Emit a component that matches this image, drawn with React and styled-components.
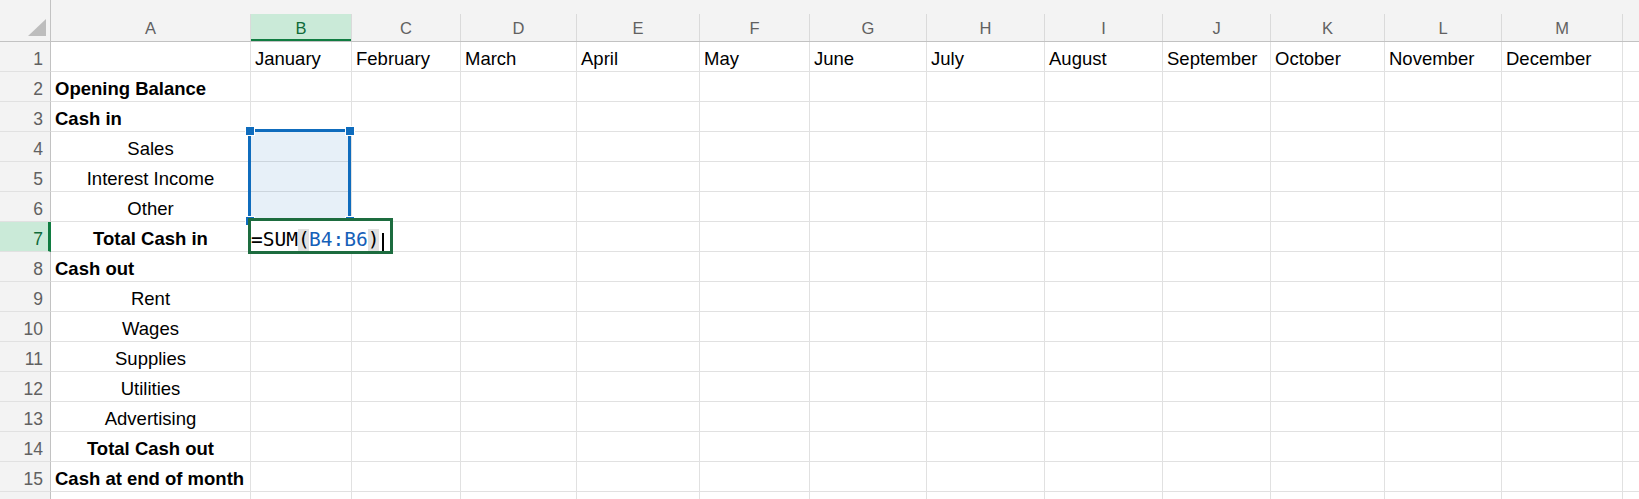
import React from 'react';
import styled, { createGlobalStyle } from 'styled-components';

const GlobalStyle = createGlobalStyle`
  html, body {
    margin: 0;
    padding: 0;
    background: #fff;
    overflow: hidden;
  }
  body {
    font-family: "Liberation Sans", Arial, sans-serif;
  }
`;

const GRID = '#e1e1e1';
const HEAD_BG = '#f3f3f3';
const HEAD_LINE = '#c2c2c2';
const SEL_BG = '#caead8';
const SEL_GREEN = '#107c41';
const RANGE_BLUE = '#0f6cbd';

// N is only partly in view, so it gets no letter
const COLUMNS = [
  { key: 'A', width: 200 },
  { key: 'B', width: 101 },
  { key: 'C', width: 109 },
  { key: 'D', width: 116 },
  { key: 'E', width: 123 },
  { key: 'F', width: 110 },
  { key: 'G', width: 117 },
  { key: 'H', width: 118 },
  { key: 'I', width: 118 },
  { key: 'J', width: 108 },
  { key: 'K', width: 114 },
  { key: 'L', width: 117 },
  { key: 'M', width: 121 },
  { key: 'N', width: 120, hidden: true },
];

const MONTHS = [
  'January', 'February', 'March', 'April', 'May', 'June',
  'July', 'August', 'September', 'October', 'November', 'December',
];

// rows of column A: text, alignment, bold
const LABELS = {
  2: { text: 'Opening Balance', align: 'left', bold: true },
  3: { text: 'Cash in', align: 'left', bold: true },
  4: { text: 'Sales', align: 'center' },
  5: { text: 'Interest Income', align: 'center' },
  6: { text: 'Other', align: 'center' },
  7: { text: 'Total Cash in', align: 'center', bold: true },
  8: { text: 'Cash out', align: 'left', bold: true },
  9: { text: 'Rent', align: 'center' },
  10: { text: 'Wages', align: 'center' },
  11: { text: 'Supplies', align: 'center' },
  12: { text: 'Utilities', align: 'center' },
  13: { text: 'Advertising', align: 'center' },
  14: { text: 'Total Cash out', align: 'center', bold: true },
  15: { text: 'Cash at end of month', align: 'left', bold: true },
};

const ROW_COUNT = 16;
const VISIBLE_ROWS = 15;
const ACTIVE_COL = 'B';
const ACTIVE_ROW = 7;

const Sheet = styled.div`
  position: relative;
  display: grid;
  grid-template-columns: 51px ${props => props.$cols};
  grid-template-rows: 42px;
  grid-auto-rows: 30px;
  width: 100vw;
  height: 100vh;
  overflow: hidden;
  background: #fff;
`;

const Corner = styled.div`
  box-sizing: border-box;
  display: flex;
  justify-content: flex-end;
  align-items: flex-end;
  padding: 0 4px 5px 0;
  background: ${HEAD_BG};
  border-right: 1px solid ${HEAD_LINE};
  border-bottom: 1px solid ${HEAD_LINE};
`;

const ColHeader = styled.div`
  box-sizing: border-box;
  padding-top: 14px;
  background: ${HEAD_BG};
  border-bottom: 1px solid ${HEAD_LINE};
`;

const ColLabel = styled.div`
  box-sizing: border-box;
  height: 27px;
  padding-top: 1px;
  border-right: 1px solid #dadada;
  font-size: 16.5px;
  line-height: 27px;
  text-align: center;
  color: ${props => (props.$selected ? '#0f6b39' : '#616161')};
  background: ${props => (props.$selected ? SEL_BG : 'transparent')};
  box-shadow: ${props => (props.$selected ? `inset 0 -2px 0 ${SEL_GREEN}` : 'none')};
`;

const RowHeader = styled.div`
  box-sizing: border-box;
  padding-right: ${props => (props.$selected ? '5px' : '7px')};
  background: ${props => (props.$selected ? SEL_BG : HEAD_BG)};
  border-right: ${props => (props.$selected ? `3px solid ${SEL_GREEN}` : `1px solid ${HEAD_LINE}`)};
  border-bottom: 1px solid ${GRID};
  font-size: 17.5px;
  line-height: 34px;
  text-align: right;
  color: ${props => (props.$selected ? '#0f6b39' : '#616161')};
  overflow: hidden;
`;

const Cell = styled.div`
  box-sizing: border-box;
  padding: 0 4px;
  border-right: 1px solid ${GRID};
  border-bottom: 1px solid ${GRID};
  font-size: 18.5px;
  line-height: 33px;
  color: #000;
  white-space: nowrap;
  text-align: ${props => props.$align || 'left'};
  font-weight: ${props => (props.$bold ? 700 : 400)};
`;

const RangeBox = styled.div`
  position: absolute;
  left: 248px;
  top: 129px;
  width: 103px;
  height: 93px;
  box-sizing: border-box;
  border: 3px solid ${RANGE_BLUE};
  background: rgba(15, 108, 189, 0.1);
`;

const Handle = styled.div`
  position: absolute;
  width: 8px;
  height: 8px;
  background: ${RANGE_BLUE};
  box-shadow: 0 0 0 1px #fff;
`;

const EditBox = styled.div`
  position: absolute;
  left: 248px;
  top: 218px;
  width: 145px;
  height: 36px;
  box-sizing: border-box;
  border: 3px solid #1d6c3f;
  background: #fff;
  padding-top: 4px;
  font-family: "DejaVu Sans Mono", "Liberation Mono", monospace;
  font-size: 19.5px;
  line-height: 30px;
  white-space: nowrap;
  color: #000;
`;

const RefText = styled.span`
  color: #1560b8;
`;

const Paren = styled.span`
  display: inline-block;
  width: 11px;
  height: 22px;
  line-height: 22px;
  text-align: center;
  background: #e1e1e1;
`;

const Caret = styled.span`
  display: inline-block;
  width: 2px;
  height: 18px;
  margin-left: 3px;
  background: #000;
  vertical-align: -5px;
`;

const HANDLES = [
  { x: 246, y: 127 },
  { x: 346, y: 127 },
  { x: 246, y: 217 },
  { x: 346, y: 217 },
];

function cellContent(row, col) {
  if (row === 1 && col.key !== 'A' && !col.hidden) {
    return { text: MONTHS[COLUMNS.indexOf(col) - 1] };
  }
  if (col.key === 'A' && LABELS[row]) return LABELS[row];
  return { text: '' };
}

export default function App() {
  const cols = COLUMNS.map(c => `${c.width}px`).join(' ');
  const rows = Array.from({ length: ROW_COUNT }, (_, i) => i + 1);

  return (
    <>
      <GlobalStyle />
      <Sheet $cols={cols}>
        <Corner>
          <svg width="18" height="17" viewBox="0 0 18 17">
            <polygon points="18,0 18,17 0,17" fill="#bdbdbd" />
          </svg>
        </Corner>
        {COLUMNS.map(col => (
          <ColHeader key={col.key}>
            <ColLabel $selected={col.key === ACTIVE_COL}>
              {col.hidden ? '' : col.key}
            </ColLabel>
          </ColHeader>
        ))}

        {rows.map(row => (
          <React.Fragment key={row}>
            <RowHeader $selected={row === ACTIVE_ROW}>
              {row <= VISIBLE_ROWS ? row : ''}
            </RowHeader>
            {COLUMNS.map(col => {
              const c = cellContent(row, col);
              return (
                <Cell key={col.key} $align={c.align} $bold={c.bold}>
                  {c.text}
                </Cell>
              );
            })}
          </React.Fragment>
        ))}

        <RangeBox />
        {HANDLES.map((h, i) => (
          <Handle key={i} style={{ left: h.x, top: h.y }} />
        ))}
        <EditBox>
          =SUM
          <Paren>(</Paren>
          <RefText>B4:B6</RefText>
          <Paren>)</Paren>
          <Caret />
        </EditBox>
      </Sheet>
    </>
  );
}
